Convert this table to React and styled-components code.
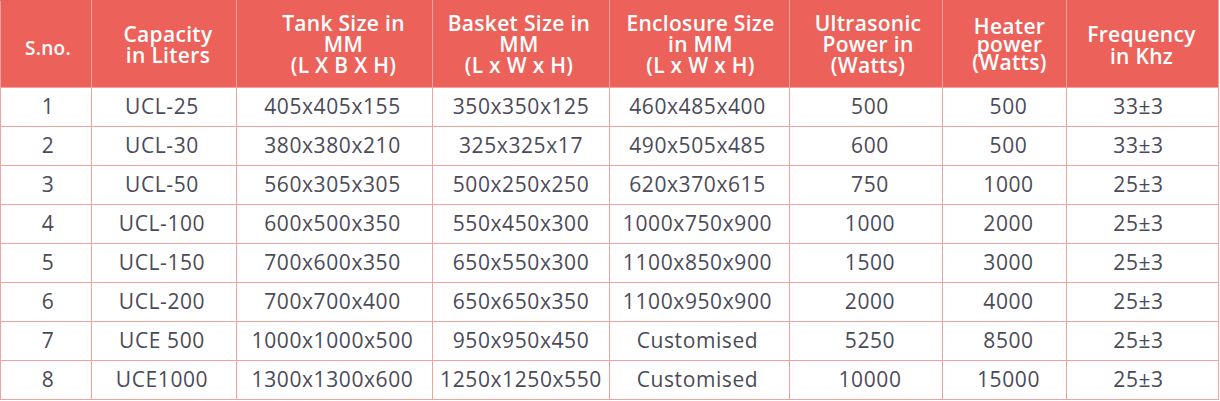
import React from "react";
import styled, { createGlobalStyle } from "styled-components";

const Global = createGlobalStyle`
  html, body { margin: 0; padding: 0; background: #ffffff; }
  body { font-family: "Open Sans", "Liberation Sans", sans-serif; }
`;

const RED = "#ec625a";
const LINE = "#f3a39d";

const Table = styled.table`
  width: 1219px;
  table-layout: fixed;
  border-collapse: collapse;
  border: 1px solid ${LINE};
`;

const Col = styled.col`
  width: ${(p) => p.$w}px;
`;

const HeadRow = styled.tr`
  height: 87px;
  background: ${RED};
`;

const HeadCell = styled.th`
  border: 1px solid ${LINE};
  border-top-color: ${RED};
  color: #ffffff;
  font-weight: 600;
  font-size: ${(p) => p.$size || 21}px;
  letter-spacing: 0.3px;
  line-height: ${(p) => p.$lh || 21}px;
  text-align: center;
  vertical-align: middle;
  padding: ${(p) => p.$dy || 0}px ${(p) => Math.max(0, -2 * p.$dx)}px 0
    ${(p) => Math.max(0, 2 * p.$dx)}px;
  white-space: nowrap;
`;

const HeadLine = styled.span`
  display: block;
`;

const BodyRow = styled.tr`
  height: 39px;
  background: #ffffff;
`;

const BodyCell = styled.td`
  border: 1px solid ${LINE};
  color: #4b4b58;
  font-size: 21px;
  letter-spacing: 0.6px;
  line-height: 24px;
  text-align: center;
  vertical-align: middle;
  padding: 0 ${(p) => Math.max(0, -2 * p.$dx)}px 2px
    ${(p) => Math.max(0, 2 * p.$dx)}px;
  white-space: nowrap;
`;

const columns = [
  { w: 91, hdx: 2, bdx: 2, size: 19, dy: 8, header: ["S.no."] },
  { w: 145, hdx: 4, bdx: -2, dy: 2, header: ["Capacity", "in Liters"] },
  { w: 196, hdx: 9, bdx: -2, dy: 0, header: ["Tank Size in", "MM", "(L X B X H)"] },
  { w: 177, hdx: -2, bdx: 0, dy: 0, header: ["Basket Size in", "MM", "(L x W x H)"] },
  { w: 180, hdx: 1, bdx: -2, dy: 0, header: ["Enclosure Size", "in MM", "(L x W x H)"] },
  { w: 153, hdx: 2, bdx: 4, dy: 0, header: ["Ultrasonic", "Power in", "(Watts)"] },
  { w: 124, hdx: 5, bdx: 4, dy: 0, lh: 18, header: ["Heater", "power", "(Watts)"] },
  { w: 152, hdx: -1, bdx: -4, dy: 2, lh: 22, header: ["Frequency", "in Khz"] },
];

const rows = [
  ["1", "UCL-25", "405x405x155", "350x350x125", "460x485x400", "500", "500", "33±3"],
  ["2", "UCL-30", "380x380x210", "325x325x17", "490x505x485", "600", "500", "33±3"],
  ["3", "UCL-50", "560x305x305", "500x250x250", "620x370x615", "750", "1000", "25±3"],
  ["4", "UCL-100", "600x500x350", "550x450x300", "1000x750x900", "1000", "2000", "25±3"],
  ["5", "UCL-150", "700x600x350", "650x550x300", "1100x850x900", "1500", "3000", "25±3"],
  ["6", "UCL-200", "700x700x400", "650x650x350", "1100x950x900", "2000", "4000", "25±3"],
  ["7", "UCE 500", "1000x1000x500", "950x950x450", "Customised", "5250", "8500", "25±3"],
  ["8", "UCE1000", "1300x1300x600", "1250x1250x550", "Customised", "10000", "15000", "25±3"],
];

export default function App() {
  return (
    <>
      <Global />
      <Table>
        <colgroup>
          {columns.map((c, i) => (
            <Col key={i} $w={c.w} />
          ))}
        </colgroup>
        <thead>
          <HeadRow>
            {columns.map((c, i) => (
              <HeadCell key={i} $dx={c.hdx} $dy={c.dy} $size={c.size} $lh={c.lh}>
                {c.header.map((l, j) => (
                  <HeadLine key={j}>{l}</HeadLine>
                ))}
              </HeadCell>
            ))}
          </HeadRow>
        </thead>
        <tbody>
          {rows.map((r, i) => (
            <BodyRow key={i}>
              {r.map((v, j) => (
                <BodyCell key={j} $dx={columns[j].bdx}>
                  {v}
                </BodyCell>
              ))}
            </BodyRow>
          ))}
        </tbody>
      </Table>
    </>
  );
}
